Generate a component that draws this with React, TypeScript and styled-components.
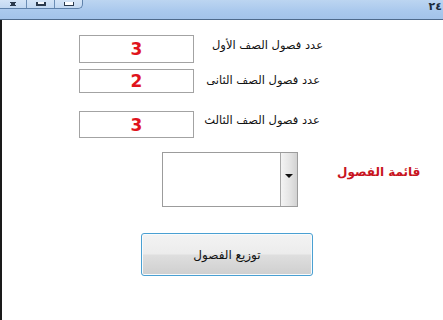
import React, { FC } from "react";
import styled, { createGlobalStyle } from "styled-components";

const GlobalStyle = createGlobalStyle`
  html, body {
    margin: 0;
    padding: 0;
    background: #ffffff;
  }
  * {
    box-sizing: border-box;
  }
`;

const Window = styled.div`
  width: 443px;
  height: 320px;
  overflow: hidden;
  display: flex;
  flex-direction: column;
  font-family: "DejaVu Sans", "Noto Sans", sans-serif;
`;

const TitleBar = styled.div`
  height: 20px;
  flex: none;
  display: flex;
  justify-content: space-between;
  align-items: flex-start;
  background: linear-gradient(to bottom, #bcd5f1 0%, #a9c8ed 60%, #a3c3ea 100%);
  border-bottom: 1px solid #4e6a8c;
`;

const CaptionButtons = styled.div`
  display: flex;
  height: 9px;
  border: 1px solid #5f82ab;
  border-top: none;
  border-left: none;
  border-bottom-right-radius: 5px;
  overflow: hidden;
  background: linear-gradient(to bottom, #d4e4f7, #c2d8f2);
`;

const CaptionButton = styled.div<{ $w: number }>`
  width: ${(p) => p.$w}px;
  height: 100%;
  display: flex;
  justify-content: center;
  align-items: flex-end;
  border-right: 1px solid #6b8db5;
  &:last-child {
    border-right: none;
  }
`;

const Glyph = styled.div<{ $kind: "close" | "max" | "min" }>`
  width: ${(p) => (p.$kind === "close" ? 12 : 10)}px;
  height: 4px;
  margin-bottom: 2px;
  ${(p) =>
    p.$kind === "close" &&
    `
    background:
      linear-gradient(135deg, transparent 40%, #2b3a4d 40%, #2b3a4d 60%, transparent 60%),
      linear-gradient(45deg, transparent 40%, #2b3a4d 40%, #2b3a4d 60%, transparent 60%);
  `}
  ${(p) =>
    p.$kind === "max" &&
    `
    border: 2px solid #2b3a4d;
    border-top: none;
    background: #f4f7fb;
  `}
  ${(p) =>
    p.$kind === "min" &&
    `
    border: 1px solid #2b3a4d;
    border-top: none;
    background: #ffffff;
  `}
`;

const TitleText = styled.div`
  margin-top: 1px;
  margin-right: 1px;
  font-size: 11px;
  font-weight: bold;
  color: #1c2a3a;
  line-height: 12px;
`;

const Content = styled.div`
  flex: 1;
  border-left: 2px solid #1a1a1a;
  display: flex;
  flex-direction: column;
  background: #ffffff;
`;

const Row = styled.div<{ $top: number; $left: number }>`
  display: flex;
  align-items: flex-start;
  margin-top: ${(p) => p.$top}px;
  padding-left: ${(p) => p.$left}px;
`;

const NumberBox = styled.div<{ $h: number }>`
  width: 115px;
  height: ${(p) => p.$h}px;
  border: 1px solid #a3a3a3;
  display: flex;
  align-items: center;
  justify-content: center;
  font-family: "DejaVu Sans", sans-serif;
  font-weight: bold;
  font-size: 17px;
  color: #e0141c;
`;

const FieldLabel = styled.div<{ $pad: number; $w: number }>`
  width: ${(p) => p.$w}px;
  padding-top: ${(p) => p.$pad}px;
  text-align: right;
  direction: rtl;
  font-size: 11.5px;
  line-height: 16px;
  color: #111111;
  white-space: nowrap;
`;

const ComboBox = styled.div`
  width: 136px;
  height: 55px;
  border: 1px solid #9c9c9c;
  display: flex;
  justify-content: flex-end;
  background: #ffffff;
`;

const DropButton = styled.div`
  width: 17px;
  height: 100%;
  border-left: 1px solid #a8a8a8;
  background: linear-gradient(to right, #f4f4f4 0%, #e6e6e6 50%, #d2d2d2 100%);
  display: flex;
  justify-content: center;
  align-items: center;
  padding-bottom: 8px;
`;

const Arrow = styled.div`
  width: 0;
  height: 0;
  border-left: 4px solid transparent;
  border-right: 4px solid transparent;
  border-top: 4px solid #111111;
`;

const ListLabel = styled.div`
  margin-left: 39px;
  margin-top: 12px;
  direction: rtl;
  font-size: 12px;
  line-height: 16px;
  font-weight: bold;
  color: #c8141e;
  white-space: nowrap;
`;

const ActionButton = styled.button`
  width: 172px;
  height: 43px;
  padding: 0;
  border: 1px solid #4aa0d2;
  border-radius: 3px;
  background: linear-gradient(
    to bottom,
    #f3f3f3 0%,
    #ececec 48%,
    #dedede 52%,
    #cfcfcf 100%
  );
  box-shadow: inset 0 0 0 1px #f8fbfd;
  font-family: "DejaVu Sans", "Noto Sans", sans-serif;
  font-size: 12px;
  color: #111111;
  direction: rtl;
`;

const rows = [
  { top: 15, h: 28, pad: 2, w: 129, value: "3", label: "عدد فصول الصف الأول" },
  { top: 6, h: 24, pad: 3, w: 126, value: "2", label: "عدد فصول الصف الثانى" },
  { top: 18, h: 27, pad: 1, w: 126, value: "3", label: "عدد فصول الصف الثالث" },
];

const App: FC = () => (
  <Window>
    <GlobalStyle />
    <TitleBar>
      <CaptionButtons>
        <CaptionButton $w={27}>
          <Glyph $kind="close" />
        </CaptionButton>
        <CaptionButton $w={28}>
          <Glyph $kind="max" />
        </CaptionButton>
        <CaptionButton $w={27}>
          <Glyph $kind="min" />
        </CaptionButton>
      </CaptionButtons>
      <TitleText>٢٤</TitleText>
    </TitleBar>
    <Content>
      {rows.map((r, i) => (
        <Row key={i} $top={r.top} $left={77}>
          <NumberBox $h={r.h}>{r.value}</NumberBox>
          <FieldLabel $pad={r.pad} $w={r.w}>
            {r.label}
          </FieldLabel>
        </Row>
      ))}
      <Row $top={14} $left={160}>
        <ComboBox>
          <DropButton>
            <Arrow />
          </DropButton>
        </ComboBox>
        <ListLabel>قائمة الفصول</ListLabel>
      </Row>
      <Row $top={26} $left={139}>
        <ActionButton>توزيع الفصول</ActionButton>
      </Row>
    </Content>
  </Window>
);

export default App;
